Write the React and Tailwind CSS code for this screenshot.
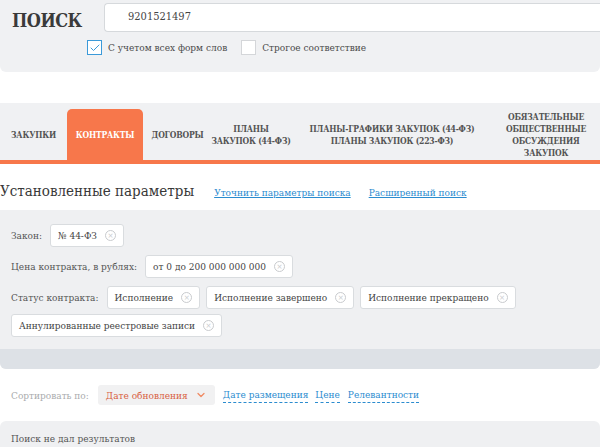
import { Check, ChevronDown } from 'lucide-react';

function Chip({ children }) {
    return (
        <span className="inline-flex items-center gap-2 h-[23px] px-[7px] bg-white border border-[#d9dcdf] rounded-[3px] text-[10px] text-[#444] whitespace-nowrap">
            {children}
            <span className="w-[11px] h-[11px] rounded-full border border-[#c9cbce] text-[#c9cbce] flex items-center justify-center text-[8px] leading-none">×</span>
        </span>
    );
}

function Tab({ children, active, className = '' }) {
    return (
        <div className={`mt-[6px] flex items-center justify-center text-center font-bold text-[8.5px] leading-[12px] tracking-[-0.2px] uppercase whitespace-nowrap ${active ? 'bg-[#f7774b] text-white rounded-t-[5px]' : 'text-[#545454]'} ${className}`}>
            {children}
        </div>
    );
}

export default function App() {
    return (
        <div className="w-[600px] h-[447px] overflow-hidden bg-white font-['DejaVu_Serif','Liberation_Serif',serif] font-stretch-condensed">
            {/* search */}
            <div className="bg-[#f0f1f3] rounded-b-[6px] h-[72px] pt-[3px]">
                <div className="flex items-start">
                    <div className="w-[104px] pl-[12px] pt-[4px] text-[18px] font-bold text-[#3a3a3a] tracking-[-0.5px]">ПОИСК</div>
                    <div className="flex-1 h-[29px] bg-white border border-[#d6d9dc] rounded-l-[4px] border-r-0 pl-[23px] flex items-center text-[11px] text-[#444]">9201521497</div>
                </div>
                <div className="flex items-center mt-[6px] pl-[87px] text-[10px] text-[#4a4a4a]">
                    <span className="w-[15px] h-[15px] border border-[#3b9ad9] bg-white flex items-center justify-center">
                        <Check size={12} strokeWidth={2} className="text-[#3b9ad9]" />
                    </span>
                    <span className="ml-[6px]">С учетом всех форм слов</span>
                    <span className="w-[15px] h-[15px] border border-[#d4d6d9] bg-white ml-[14px]" />
                    <span className="ml-[6px]">Строгое соответствие</span>
                </div>
            </div>

            {/* tabs */}
            <div className="mt-[31px] bg-[#f0f1f3] h-[61px] border-b-[4px] border-[#f7774b] flex items-stretch">
                <Tab className="w-[67px]">Закупки</Tab>
                <Tab active className="w-[76px]">Контракты</Tab>
                <Tab className="w-[69px]">Договоры</Tab>
                <Tab className="w-[78px]">Планы<br />закупок (44-ФЗ)</Tab>
                <Tab className="w-[204px]">Планы-графики закупок (44-ФЗ)<br />Планы закупок (223-ФЗ)</Tab>
                <Tab className="w-[104px]">Обязательные<br />общественные<br />обсуждения<br />закупок</Tab>
            </div>

            {/* params header */}
            <div className="flex items-baseline h-[46px] pt-[16px]">
                <span className="text-[15px] text-[#383838]">Установленные параметры</span>
                <a className="ml-[20px] text-[10px] text-[#2b8ccf] underline">Уточнить параметры поиска</a>
                <a className="ml-[18px] text-[10px] text-[#2b8ccf] underline">Расширенный поиск</a>
            </div>

            {/* params */}
            <div className="bg-[#eff0f2] rounded-b-[6px] overflow-hidden">
                <div className="px-[11px] pt-[14px] pb-[12px] flex flex-col gap-[8px] text-[10px] text-[#555]">
                    <div className="flex items-center gap-[8px]">
                        <span>Закон:</span>
                        <Chip>№ 44-ФЗ</Chip>
                    </div>
                    <div className="flex items-center gap-[8px]">
                        <span>Цена контракта, в рублях:</span>
                        <Chip>от 0 до 200 000 000 000</Chip>
                    </div>
                    <div className="flex flex-wrap items-center gap-x-[6px] gap-y-[5px]">
                        <span className="mr-[2px]">Статус контракта:</span>
                        <Chip>Исполнение</Chip>
                        <Chip>Исполнение завершено</Chip>
                        <Chip>Исполнение прекращено</Chip>
                        <Chip>Аннулированные реестровые записи</Chip>
                    </div>
                </div>
                <div className="h-[20px] bg-[#dde1e6]" />
            </div>

            {/* sort */}
            <div className="h-[52px] flex items-center px-[11px] text-[10px] whitespace-nowrap">
                <span className="text-[#a9abad]">Сортировать по:</span>
                <span className="ml-[9px] h-[20px] w-[117px] bg-[#f1f1f2] rounded-[3px] flex items-center justify-between px-[8px] text-[#d8603f]">
                    Дате обновления
                    <ChevronDown size={12} strokeWidth={2.5} className="text-[#f08a62]" />
                </span>
                <span className="ml-[8px] text-[#2b8ccf] border-b border-dashed border-[#2b8ccf]">Дате размещения</span>
                <span className="ml-[7px] text-[#2b8ccf] border-b border-dashed border-[#2b8ccf]">Цене</span>
                <span className="ml-[8px] text-[#2b8ccf] border-b border-dashed border-[#2b8ccf]">Релевантности</span>
            </div>

            {/* results */}
            <div className="bg-[#eff0f2] rounded-t-[6px] h-[40px] px-[11px] pt-[10px] text-[10px] text-[#555]">
                Поиск не дал результатов
            </div>
        </div>
    );
}
